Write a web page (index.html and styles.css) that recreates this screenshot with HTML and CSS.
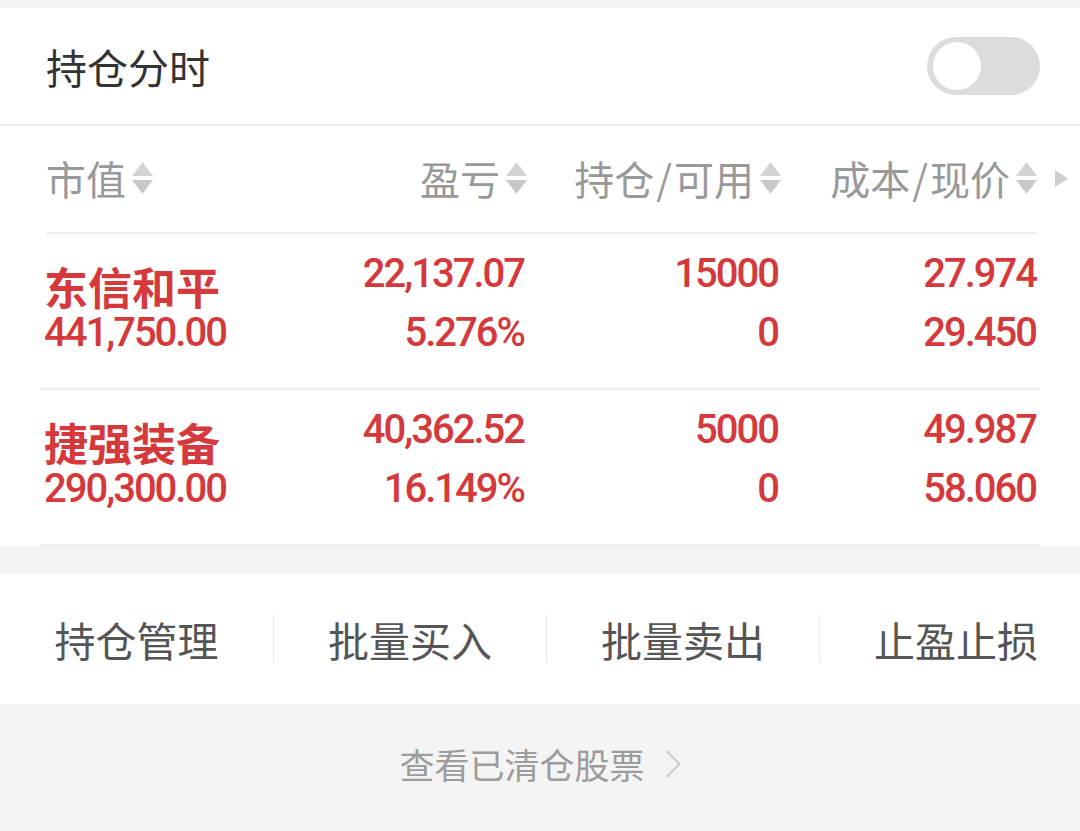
FILE: index.html
```html
<!DOCTYPE html>
<html lang="zh-CN">
<head>
<meta charset="UTF-8" />
<meta name="viewport" content="width=device-width, initial-scale=1" />
<title>持仓</title>
<link rel="stylesheet" href="styles.css">
</head>
<body>

<div class="card">
  <div class="title-bar">
    <span class="title">持仓分时</span>
    <div class="toggle"><div class="knob"></div></div>
  </div>

  <div class="thead">
    <div class="thead-cols">
      <div class="th th-left">市值<svg class="sort" viewBox="0 0 20 30"><polygon points="10,0 20,13 0,13" fill="#d3d3d3"/><polygon points="0,17 20,17 10,30" fill="#c8c8c8"/></svg></div>
      <div class="th">盈亏<svg class="sort" viewBox="0 0 20 30"><polygon points="10,0 20,13 0,13" fill="#d3d3d3"/><polygon points="0,17 20,17 10,30" fill="#c8c8c8"/></svg></div>
      <div class="th">持仓<span class="sl">/</span>可用<svg class="sort" viewBox="0 0 20 30"><polygon points="10,0 20,13 0,13" fill="#d3d3d3"/><polygon points="0,17 20,17 10,30" fill="#c8c8c8"/></svg></div>
      <div class="th">成本<span class="sl">/</span>现价<svg class="sort" viewBox="0 0 20 30"><polygon points="10,0 20,13 0,13" fill="#d3d3d3"/><polygon points="0,17 20,17 10,30" fill="#c8c8c8"/></svg></div>
    </div>
    <div class="more"><svg width="13" height="17" viewBox="0 0 13 17"><polygon points="0,0 13,8.5 0,17" fill="#cfcfcf"/></svg></div>
  </div>

  <div class="row">
    <div class="cell cell-name">
      <div class="name">东信和平</div>
      <div class="num num-sub">441,750.00</div>
    </div>
    <div class="cell">
      <div class="num">22,137.07</div>
      <div class="num">5.276%</div>
    </div>
    <div class="cell">
      <div class="num">15000</div>
      <div class="num">0</div>
    </div>
    <div class="cell">
      <div class="num">27.974</div>
      <div class="num">29.450</div>
    </div>
  </div>

  <div class="row">
    <div class="cell cell-name">
      <div class="name">捷强装备</div>
      <div class="num num-sub">290,300.00</div>
    </div>
    <div class="cell">
      <div class="num">40,362.52</div>
      <div class="num">16.149%</div>
    </div>
    <div class="cell">
      <div class="num">5000</div>
      <div class="num">0</div>
    </div>
    <div class="cell">
      <div class="num">49.987</div>
      <div class="num">58.060</div>
    </div>
  </div>
</div>

<div class="actions">
  <div class="action">持仓管理</div>
  <div class="action">批量买入</div>
  <div class="action">批量卖出</div>
  <div class="action">止盈止损</div>
</div>

<div class="footer">
  <span class="cleared">查看已清仓股票</span>
  <svg class="chev" width="16" height="28" viewBox="0 0 16 28"><polyline points="1.5,1 14.5,14 1.5,27" fill="none" stroke="#c9c9c9" stroke-width="2"/></svg>
</div>

</body>
</html>
```

FILE: styles.css
```css
* {
  margin: 0;
  padding: 0;
  box-sizing: border-box;
}
body {
  font-family: "Noto Sans CJK SC", "Noto Sans", sans-serif;
  background: #f4f4f4;
  padding-top: 8px;
  width: 1080px;
  overflow: hidden;
}

.card {
  background: #fff;
}

.title-bar {
  height: 118px;
  display: flex;
  align-items: center;
  justify-content: space-between;
  padding: 0 40px 0 46px;
  border-bottom: 2px solid #ededed;
}
.title {
  font-size: 41px;
  color: #333;
}
.toggle {
  width: 113px;
  height: 58px;
  border-radius: 29px;
  background: #dcdcdc;
  display: flex;
  align-items: center;
  padding-left: 6px;
}
.knob {
  width: 48px;
  height: 48px;
  border-radius: 50%;
  background: #fff;
}

.thead {
  display: flex;
  height: 108px;
}
.thead-cols {
  flex: 1;
  margin-left: 46px;
  display: grid;
  grid-template-columns: 1fr 254px 254px 256px;
  border-bottom: 2px solid #efefef;
}
.th {
  display: flex;
  align-items: center;
  justify-content: flex-end;
  font-size: 40px;
  color: #999;
  padding-bottom: 3px;
}
.th-left {
  justify-content: flex-start;
}
.sl {
  margin: 0 2px;
}
.sort {
  width: 21px;
  height: 32px;
  margin-left: 6px;
}
.more {
  width: 43px;
  display: flex;
  align-items: center;
  padding-left: 18px;
  padding-bottom: 3px;
}

.row {
  margin: 0 40px;
  padding: 10px 4px 26px;
  display: grid;
  grid-template-columns: 1fr 254px 254px 258px;
  border-bottom: 2px solid #efefef;
  color: #d6393b;
}
.cell {
  text-align: right;
}
.cell-name {
  text-align: left;
  padding-top: 20px;
}
.name {
  font-size: 44px;
  font-weight: 700;
  line-height: 44px;
}
.num {
  font-family: Roboto, "Noto Sans", sans-serif;
  font-size: 40px;
  font-weight: 500;
  letter-spacing: -2px;
  line-height: 59px;
}
.num-sub {
  line-height: 50px;
}

.actions {
  margin-top: 28px;
  background: #fff;
  height: 130px;
  display: grid;
  grid-template-columns: repeat(4, 273px);
  align-items: center;
  overflow: hidden;
}
.action {
  height: 48px;
  line-height: 48px;
  text-align: center;
  font-size: 41px;
  color: #555;
}
.action + .action {
  border-left: 1px solid #e8e8e8;
}

.footer {
  display: flex;
  justify-content: center;
  align-items: center;
  padding-top: 40px;
  gap: 20px;
}
.cleared {
  font-size: 35px;
  line-height: 40px;
  color: #9c9c9c;
}
```
